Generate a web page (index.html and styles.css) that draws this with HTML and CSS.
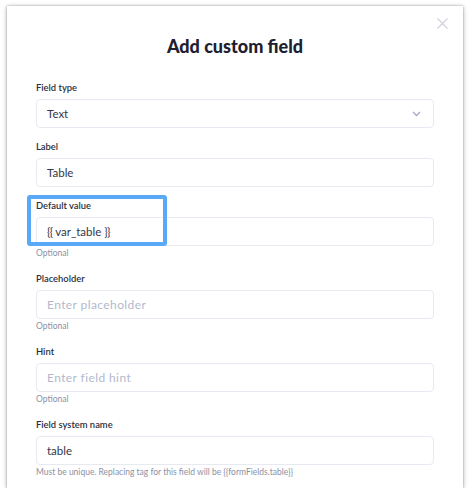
FILE: index.html
```html
<!DOCTYPE html>
<html>
<head>
<meta charset="utf-8">
<link rel="stylesheet" href="styles.css">
</head>
<body>
<div class="modal">
  <button class="close" aria-label="Close">
    <svg width="11" height="11" viewBox="0 0 11 11"><path d="M0.5 0.5L10.5 10.5M10.5 0.5L0.5 10.5" stroke="#cdd1dc" stroke-width="1.1" fill="none"/></svg>
  </button>
  <h1 class="title">Add custom field</h1>
  <div class="form">
    <div class="group">
      <div class="label">Field type</div>
      <div class="input select">
        <span class="value">Text</span>
        <svg class="chev" width="9" height="6" viewBox="0 0 9 6"><path d="M1 1L4.5 4.5L8 1" stroke="#a3aac4" stroke-width="1.3" fill="none"/></svg>
      </div>
    </div>
    <div class="group">
      <div class="label">Label</div>
      <div class="input"><span class="value">Table</span></div>
    </div>
    <div class="group">
      <div class="highlight"></div>
      <div class="label">Default value</div>
      <div class="input"><span class="value"><span class="tight">{{</span> var_table <span class="tight">}}</span></span></div>
      <div class="help">Optional</div>
    </div>
    <div class="group">
      <div class="label">Placeholder</div>
      <div class="input"><span class="ph">Enter placeholder</span></div>
      <div class="help">Optional</div>
    </div>
    <div class="group">
      <div class="label">Hint</div>
      <div class="input"><span class="ph">Enter field hint</span></div>
      <div class="help">Optional</div>
    </div>
    <div class="group">
      <div class="label">Field system name</div>
      <div class="input"><span class="value">table</span></div>
      <div class="help">Must be unique. Replacing tag for this field will be {{formFields.table}}</div>
    </div>
  </div>
</div>
</body>
</html>
```
FILE: styles.css
```css
* { box-sizing: border-box; }
html, body { margin: 0; padding: 0; background: #ffffff; }
body {
  font-family: Lato, "Open Sans", sans-serif;
  color: #2b2f3d;
  padding: 6px 7px 0 7px;
}
.modal {
  position: relative;
  width: 456px;
  background: #fff;
  box-shadow: 0 0 2px rgba(0,0,0,0.3), 0 1px 5px rgba(0,0,0,0.28);
  padding: 28px 29px 9px 29px;
}
.close {
  position: absolute;
  top: 12px;
  right: 15px;
  border: 0;
  background: none;
  padding: 0;
  width: 11px;
  height: 11px;
  display: flex;
}
.title {
  margin: 0 0 23px 0;
  text-align: center;
  font-size: 18px;
  line-height: 24px;
  font-weight: 900;
  color: #1d2030;
}
.form { display: flex; flex-direction: column; gap: 12px; }
.group { position: relative; display: flex; flex-direction: column; }
.label {
  font-size: 9.4px;
  line-height: 14px;
  font-weight: 600;
  color: #2b2f3d;
  margin-bottom: 4px;
}
.input {
  height: 29px;
  border: 1px solid #e8eaf2;
  border-radius: 4px;
  display: flex;
  align-items: center;
  padding: 0 10px;
}
.select { justify-content: space-between; padding-right: 12px; }
.value { color: #33374a; font-size: 11.5px; }
.tight { letter-spacing: -0.7px; }
.ph { color: #b3b9cd; font-size: 12px; letter-spacing: 0.4px; }
.chev { display: block; }
.help {
  margin-top: 1px;
  font-size: 8.5px;
  line-height: 13px;
  color: #8b91a5;
}
.highlight {
  position: absolute;
  left: -9px;
  top: -4px;
  width: 140px;
  height: 51px;
  border: 4px solid #5aa9f7;
  border-radius: 3px;
  pointer-events: none;
}
```
